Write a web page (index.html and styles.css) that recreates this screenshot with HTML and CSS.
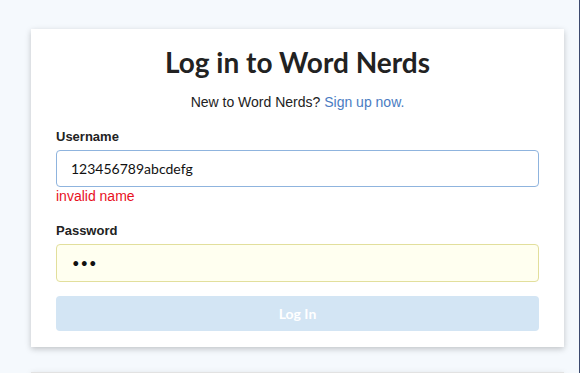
FILE: index.html
```html
<!DOCTYPE html>
<html lang="en">
  <head>
    <meta charset="UTF-8" />
    <meta name="viewport" content="width=device-width, initial-scale=1.0" />
    <title>Log in to Word Nerds</title>
    <link rel="stylesheet" href="styles.css">
  </head>
  <body>
    <div class="page">
      <main class="content">
        <!-- Login card -->
        <form class="card login-form">
          <h1 class="title">Log in to Word Nerds</h1>
          <p class="subtitle">New to Word Nerds? <a href="#">Sign up now.</a></p>

          <label class="field-label" for="username">Username</label>
          <input class="field field-error" type="text" id="username" value="123456789abcdefg" />
          <span class="error-message">invalid name</span>

          <label class="field-label" for="password">Password</label>
          <input class="field field-autofill" type="password" id="password" value="abc" />

          <button class="submit-btn" type="submit" disabled>Log In</button>
        </form>

        <!-- Next card, cut off by the window -->
        <div class="card next-card"></div>
      </main>
      <div class="edge"></div>
    </div>
  </body>
</html>
```

FILE: styles.css
```css
/* Page */
html,
body {
  margin: 0;
  height: 100%;
  overflow: hidden;
}

body {
  background-color: #f5f9fd;
  font-family: "Liberation Sans", Arial, sans-serif;
  color: #222;
}

.page {
  display: flex;
  height: 100%;
}

.content {
  flex: 1;
  padding: 29px 15px 0 31px;
}

.edge {
  width: 1px;
  background-color: #3c4a6e;
}

/* Card styles */
.card {
  width: 533px;
  box-sizing: border-box;
  background-color: #fff;
  box-shadow: 0 2px 6px rgba(0, 0, 0, 0.22);
}

.login-form {
  display: flex;
  flex-direction: column;
  padding: 16px 25px 16px;
}

.next-card {
  margin-top: 25px;
  height: 2px;
  border-top: 1px solid #e2e2e2;
}

/* Headings */
.title {
  margin: 0;
  font-family: Lato, sans-serif;
  font-size: 28px;
  font-weight: 700;
  line-height: 34px;
  text-align: center;
  color: #222;
}

.subtitle {
  margin: 13px 0 0;
  font-size: 14px;
  line-height: 20px;
  text-align: center;
  color: #222;
}

.subtitle a {
  color: #4a7cc2;
  text-decoration: none;
}

/* Form fields */
.field-label {
  margin-top: 17px;
  font-size: 13px;
  font-weight: 700;
  line-height: 16px;
  color: #222;
}

.field-label + .field {
  margin-top: 5px;
}

.error-message + .field-label {
  margin-top: 18px;
}

.field {
  height: 37px;
  box-sizing: border-box;
  padding: 0 14px;
  border: 1px solid #ccc;
  border-radius: 4px;
  font-family: Lato, sans-serif;
  font-size: 14px;
  color: #111;
  outline: none;
}

.field-error {
  border-color: #8fb4de;
}

.field-autofill {
  height: 38px;
  padding-left: 15px;
  background-color: #fffff0;
  border-color: #e2df9c;
  font-size: 13px;
  letter-spacing: 1px;
}

.error-message {
  font-size: 14px;
  line-height: 18px;
  color: #e8101e;
}

/* Submit button */
.submit-btn {
  margin-top: 14px;
  height: 35px;
  border: none;
  border-radius: 4px;
  background-color: #d3e5f4;
  color: #fff;
  font-family: Lato, sans-serif;
  font-size: 14px;
  font-weight: 700;
}
```
